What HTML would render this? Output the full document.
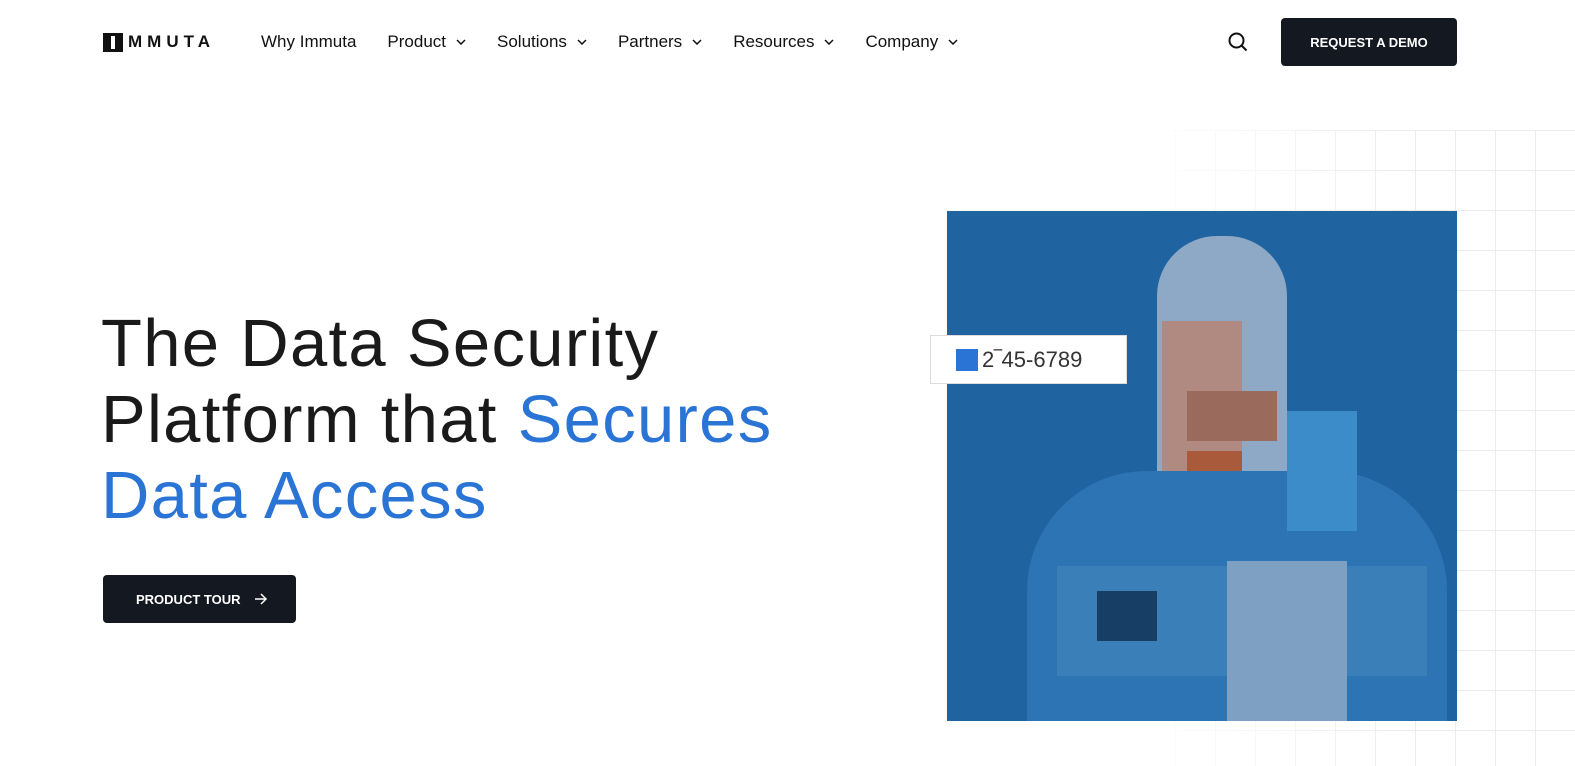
<!DOCTYPE html>
<html><head><meta charset="utf-8"><style>
*{margin:0;padding:0;box-sizing:border-box}
body{width:1575px;height:766px;overflow:hidden;background:#fff;font-family:"Liberation Sans",sans-serif;color:#111;position:relative}
.nav{position:absolute;top:0;left:0;width:100%;height:84px}
.logo{position:absolute;left:103px;top:32px;display:flex;align-items:center}
.logo .b{width:20px;height:19px;background:#111;position:relative}
.logo .b:after{content:"";position:absolute;left:8px;top:3px;width:4px;height:13px;background:#fff}
.logo span{font-weight:bold;font-size:17px;letter-spacing:5px;margin-left:5px}
.menu{position:absolute;top:32px;left:261px;font-size:17px;display:flex}
.menu div{margin-right:31px;display:flex;align-items:center}
.menu svg{margin-left:10px}
.search{position:absolute;left:1228px;top:32px}
.demo{position:absolute;left:1281px;top:18px;width:176px;height:48px;background:#141821;color:#fff;border-radius:4px;font-size:13px;font-weight:bold;display:flex;align-items:center;justify-content:center}
h1{position:absolute;left:101px;top:306px;font-weight:300;font-size:67px;line-height:76px;letter-spacing:1.3px;color:#1a1a1a}
h1 b{font-weight:300;color:#2a74d6}
.tour{position:absolute;left:103px;top:575px;width:193px;height:48px;background:#141821;color:#fff;border-radius:4px;font-size:13px;font-weight:bold;display:flex;align-items:center;padding-left:33px}
.grid{position:absolute;left:1140px;top:130px;width:435px;height:636px;background-image:linear-gradient(#ececec 1px,transparent 1px),linear-gradient(90deg,#ececec 1px,transparent 1px);background-size:40px 40px;background-position:-5px 0;-webkit-mask-image:linear-gradient(90deg,transparent,#000 60%)}
.img{position:absolute;left:947px;top:211px;width:510px;height:510px;background:#1f63a0;overflow:hidden}
.img div{position:absolute}
.tag{position:absolute;left:930px;top:335px;width:197px;height:49px;background:#fff;border:1px solid #ddd;font-size:22px;color:#333;display:flex;align-items:center;padding-left:25px}
.tag i{display:inline-block;width:22px;height:22px;background:#2a74d6;margin-right:4px}
</style></head><body>
<div class="grid"></div>
<div class="nav">
<div class="logo"><div class="b"></div><span>MMUTA</span></div>
<div class="menu">
<div>Why Immuta</div>
<div>Product<svg width="10" height="6"><path d="M1 1l4 4 4-4" stroke="#111" stroke-width="1.5" fill="none"/></svg></div>
<div>Solutions<svg width="10" height="6"><path d="M1 1l4 4 4-4" stroke="#111" stroke-width="1.5" fill="none"/></svg></div>
<div>Partners<svg width="10" height="6"><path d="M1 1l4 4 4-4" stroke="#111" stroke-width="1.5" fill="none"/></svg></div>
<div>Resources<svg width="10" height="6"><path d="M1 1l4 4 4-4" stroke="#111" stroke-width="1.5" fill="none"/></svg></div>
<div>Company<svg width="10" height="6"><path d="M1 1l4 4 4-4" stroke="#111" stroke-width="1.5" fill="none"/></svg></div>
</div>
<svg class="search" width="20" height="20"><circle cx="8.5" cy="8.5" r="7" stroke="#111" stroke-width="2" fill="none"/><path d="M13.5 13.5l5 5" stroke="#111" stroke-width="2"/></svg>
<div class="demo">REQUEST A DEMO</div>
</div>
<h1>The Data Security<br>Platform that <b>Secures</b><br><b>Data Access</b></h1>
<div class="tour">PRODUCT TOUR <svg style="margin-left:14px" width="14" height="12"><path d="M1 6h11M7 1l5 5-5 5" stroke="#fff" stroke-width="1.5" fill="none"/></svg></div>
<div class="img">
<div style="left:210px;top:25px;width:130px;height:300px;background:#8ea9c6;border-radius:60px 60px 10px 10px"></div>
<div style="left:215px;top:110px;width:80px;height:150px;background:#b08a80"></div>
<div style="left:240px;top:180px;width:90px;height:50px;background:#9a6a5c"></div>
<div style="left:240px;top:240px;width:55px;height:120px;background:#a85a3a"></div>
<div style="left:80px;top:260px;width:420px;height:250px;background:#2d74b5;border-radius:120px 120px 0 0"></div>
<div style="left:110px;top:355px;width:370px;height:110px;background:#3a7fb8"></div>
<div style="left:150px;top:380px;width:60px;height:50px;background:#173f66"></div>
<div style="left:280px;top:350px;width:120px;height:160px;background:#7da0c3"></div>
<div style="left:340px;top:200px;width:70px;height:120px;background:#3b8cc9"></div>
</div>
<div class="tag"><i></i>2‾45-6789</div>
</body></html>
